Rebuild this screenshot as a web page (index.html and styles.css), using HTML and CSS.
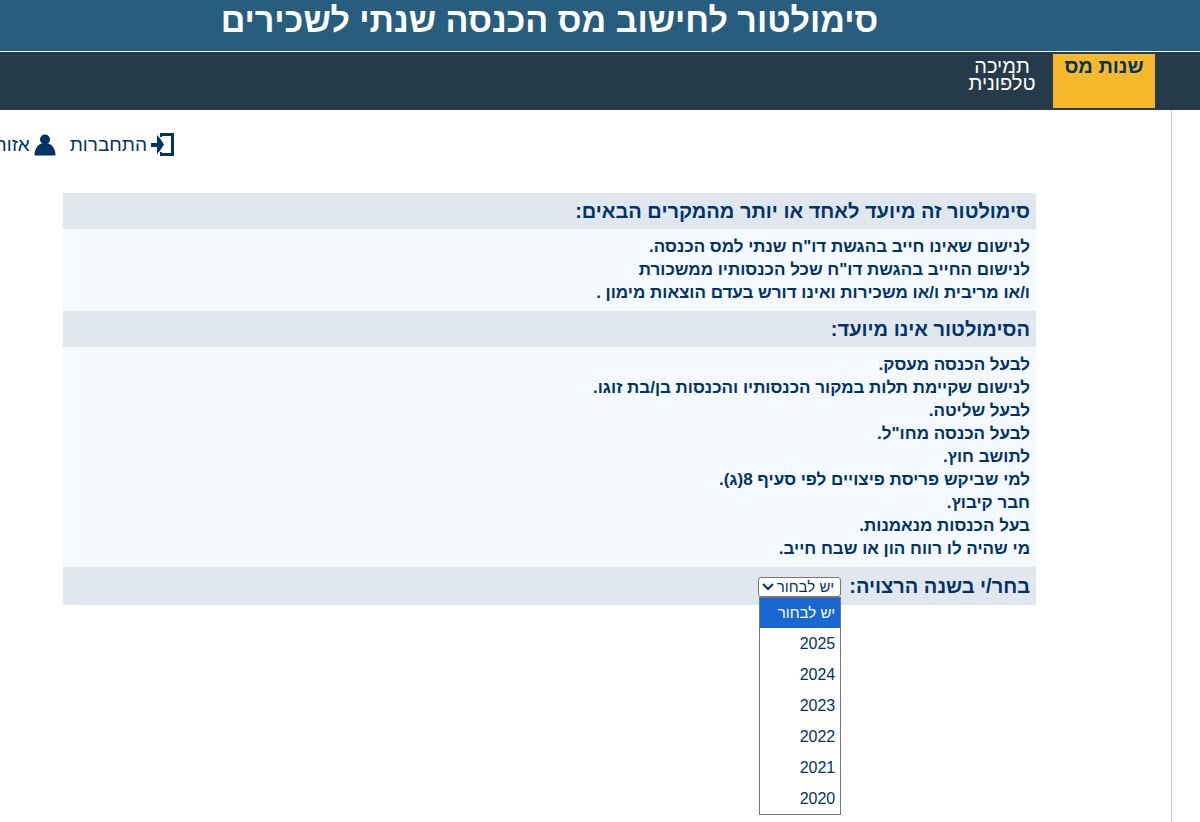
FILE: index.html
```html
<!DOCTYPE html>
<html lang="he" dir="rtl">

<head>
    <meta charset="UTF-8">
    <meta name="viewport" content="width=device-width, initial-scale=1.0">
    <title>סימולטור לחישוב מס הכנסה שנתי לשכירים</title>
    <link rel="stylesheet" href="styles.css">
</head>

<body>
    <header class="site-header">
        <h1>סימולטור לחישוב מס הכנסה שנתי לשכירים</h1>
    </header>
    <nav class="main-nav">
        <a href="#" class="nav-item active">שנות מס</a>
        <a href="#" class="nav-item">תמיכה טלפונית</a>
    </nav>
    <div class="page">
        <div class="user-bar">
            <a href="#" class="user-link">
                <svg width="24" height="24" viewBox="0 0 24 24" aria-hidden="true">
                    <path d="M9 0H23V23H9V19H11V20H20V3H11V4H9Z" fill="#003366" />
                    <path d="M0 10H6V2Q10 6 13 11.500Q10 17 6 21V14H0Z" fill="#003366" />
                </svg>
                <span>התחברות</span>
            </a>
            <a href="#" class="user-link">
                <svg width="22" height="22" viewBox="0 0 22 22" aria-hidden="true">
                    <circle cx="11" cy="5.500" r="5" fill="#003366" />
                    <path d="M0.500 21.500C0.500 15 3.500 11 7.500 9.500H14.500C18.500 11 21.500 15 21.500 21.500Z" fill="#003366" />
                </svg>
                <span>אזור</span>
            </a>
        </div>
        <main class="content">
            <h2>סימולטור זה מיועד לאחד או יותר מהמקרים הבאים:</h2>
            <ul class="cases">
                <li>לנישום שאינו חייב בהגשת דו"ח שנתי למס הכנסה.</li>
                <li>לנישום החייב בהגשת דו"ח שכל הכנסותיו ממשכורת<br>ו/או מריבית ו/או משכירות ואינו דורש בעדם הוצאות מימון .</li>
            </ul>
            <h2>הסימולטור אינו מיועד:</h2>
            <ul class="cases">
                <li>לבעל הכנסה מעסק.</li>
                <li>לנישום שקיימת תלות במקור הכנסותיו והכנסות בן/בת זוגו.</li>
                <li>לבעל שליטה.</li>
                <li>לבעל הכנסה מחו"ל.</li>
                <li>לתושב חוץ.</li>
                <li>למי שביקש פריסת פיצויים לפי סעיף 8(ג).</li>
                <li>חבר קיבוץ.</li>
                <li>בעל הכנסות מנאמנות.</li>
                <li>מי שהיה לו רווח הון או שבח חייב.</li>
            </ul>
            <div class="year-row">
                <label for="year">בחר/י בשנה הרצויה:</label>
                <div class="year-select">
                    <select id="year" name="year">
                        <option selected>יש לבחור</option>
                        <option>2025</option>
                        <option>2024</option>
                        <option>2023</option>
                        <option>2022</option>
                        <option>2021</option>
                        <option>2020</option>
                    </select>
                    <svg class="chevron" width="12" height="8" viewBox="0 0 12 8" aria-hidden="true">
                        <path d="M1 1L6 6L11 1" fill="none" stroke="#003366" stroke-width="2" />
                    </svg>
                    <ul class="year-menu" role="listbox" aria-label="שנת מס">
                        <li role="option" aria-selected="true" class="selected">יש לבחור</li>
                        <li role="option">2025</li>
                        <li role="option">2024</li>
                        <li role="option">2023</li>
                        <li role="option">2022</li>
                        <li role="option">2021</li>
                        <li role="option">2020</li>
                    </ul>
                </div>
            </div>
        </main>
    </div>
</body>

</html>
```

FILE: styles.css
```css
* {
    box-sizing: border-box;
}

body {
    margin: 0;
    min-height: 100vh;
    display: flex;
    flex-direction: column;
    background: #fff;
    color: #003366;
    font-family: "Liberation Sans", sans-serif;
    font-size: 16px;
}

ul {
    list-style: none;
    margin: 0;
    padding: 0;
}

a {
    color: inherit;
    text-decoration: none;
}

.site-header {
    background: #275d7e;
    border-bottom: 1px solid #fff;
    height: 52px;
    padding-right: 101px;
}

.site-header h1 {
    margin: 0;
    color: #fff;
    font-size: 34px;
    line-height: 40px;
    text-align: center;
}

.main-nav {
    display: flex;
    background: #263b4a;
    height: 58px;
    padding: 2px 45px 2px 0;
}

.nav-item {
    width: 102px;
    padding: 4px 16px;
    color: #fff;
    font-size: 20px;
    line-height: 17px;
    text-align: center;
}

.nav-item.active {
    background: #f7b82a;
    color: #003366;
    font-weight: bold;
    padding: 4px 8px;
}

.page {
    flex: 1;
    margin-right: 28px;
    border-right: 1px solid #c4c4c4;
}

.user-bar {
    display: flex;
    gap: 14px;
    width: 175px;
    margin-right: auto;
    padding: 22px 0 35px;
    overflow: hidden;
    white-space: nowrap;
}

.user-link {
    display: flex;
    flex: none;
    align-items: center;
    gap: 4px;
    font-size: 19px;
    line-height: 26px;
}

.content {
    margin: 0 135px 0 63px;
    background: #f4f9ff;
}

.content h2,
.year-row {
    margin: 0;
    padding: 4px 6px;
    background: #e1e7ef;
    font-size: 20px;
    font-weight: bold;
    line-height: 28px;
}

.cases {
    padding: 6px 6px 7px;
    font-size: 17px;
    font-weight: bold;
    line-height: 23px;
}

.year-row {
    display: flex;
    align-items: center;
    gap: 8px;
    height: 38px;
}

.year-select {
    position: relative;
    width: 83px;
    font-size: 16px;
    font-weight: normal;
}

.year-select select {
    display: block;
    appearance: none;
    width: 100%;
    height: 20px;
    margin-top: 2px;
    padding: 0 6px;
    border: 1px solid #767676;
    border-radius: 3px;
    background: #fff;
    color: #003366;
    font: inherit;
    font-size: 15px;
    line-height: 18px;
}

.chevron {
    position: absolute;
    left: 4px;
    top: 8px;
}

.year-menu {
    position: absolute;
    top: 100%;
    left: 1px;
    right: 0;
    border: 1px solid #767676;
    background: #fff;
}

.year-menu li {
    padding: 0 5px;
    line-height: 31px;
}

.year-menu .selected {
    background: #1967d2;
    color: #fff;
    font-size: 15px;
    line-height: 30px;
}
```
